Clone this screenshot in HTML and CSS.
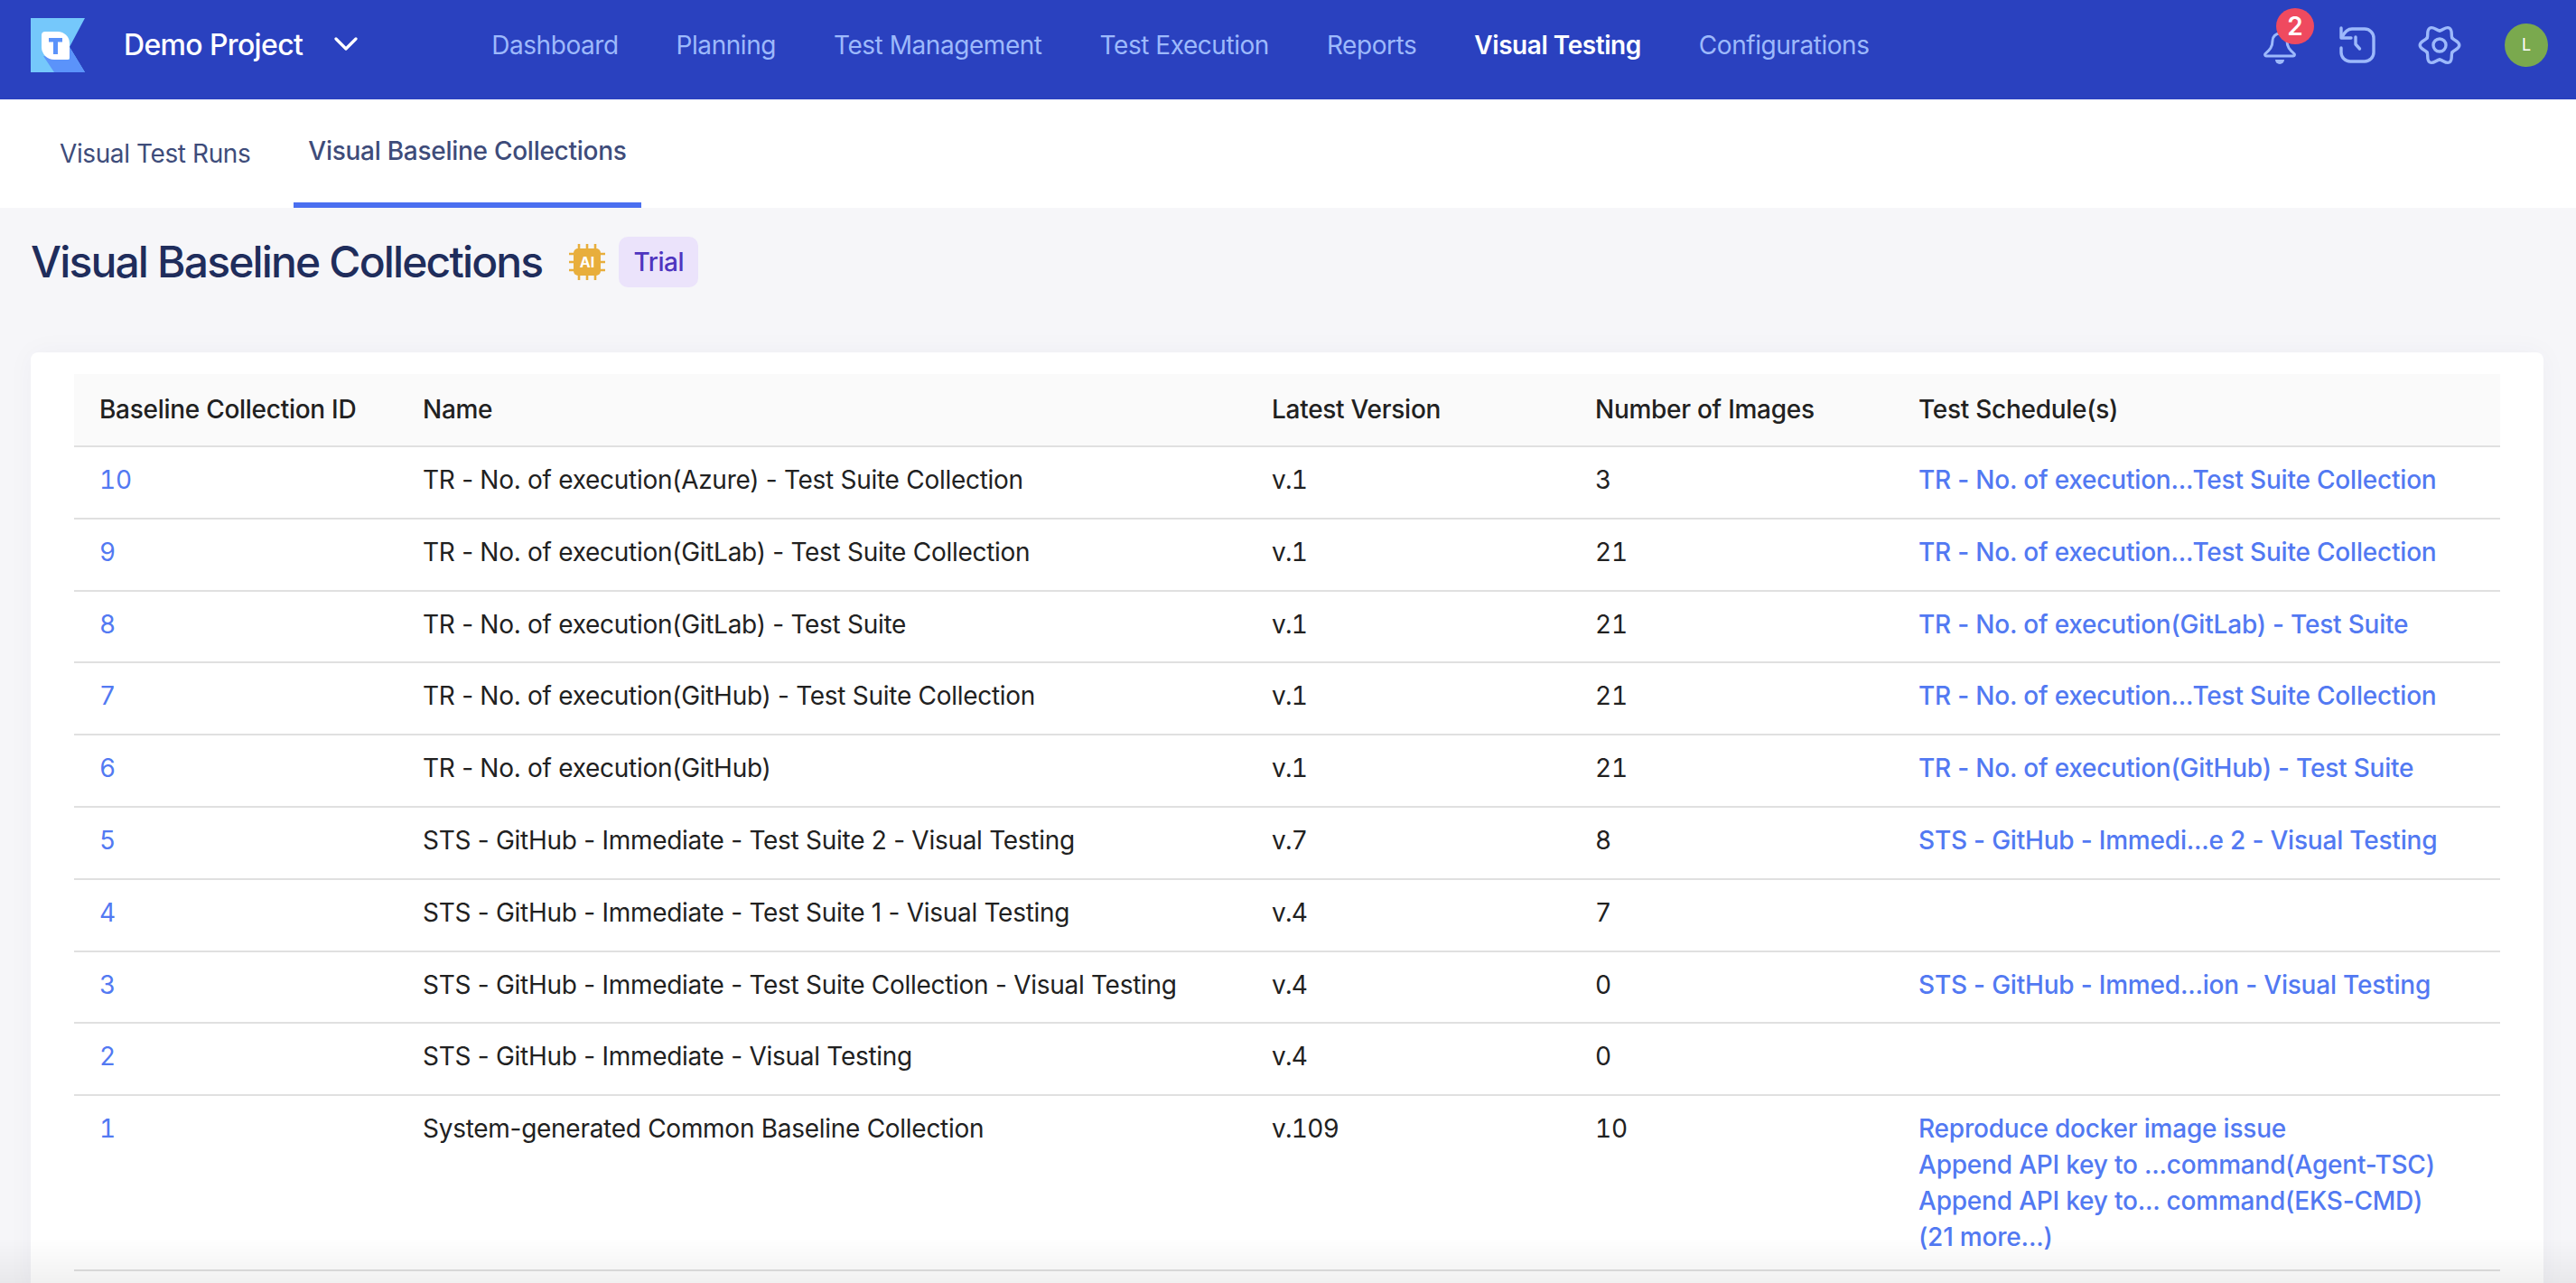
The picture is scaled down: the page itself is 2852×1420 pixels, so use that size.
FILE: index.html
```html
<!DOCTYPE html>
<html lang="en">
<head>
    <meta charset="UTF-8">
    <title>Visual Baseline Collections</title>
    <link rel="stylesheet" href="styles.css">
</head>
<body>
    <!-- top bar -->
    <header class="topbar">
        <svg class="logo" viewBox="0 0 60 60">
            <polygon points="0,0 60,0 43,32 60,60 0,60" fill="#75c8fb"/>
            <polygon points="14,42 26,60 60,60 43,32 43,46" fill="#5b93fa"/>
            <path d="M12 19a4 4 0 0 1 4-4h14a13 13 0 0 1 13 13v16a2 2 0 0 1-2 2H26a14 14 0 0 1-14-14z" fill="#fff"/>
            <path d="M20 22h15v4.500h-5V40h-5V26.500h-5z" fill="#5b93fa"/>
        </svg>
        <span class="project-name">Demo Project</span>
        <svg class="chevron" viewBox="0 0 26 16"><path d="M2 2l11 11L24 2" fill="none" stroke="#fff" stroke-width="3.200" stroke-linecap="round" stroke-linejoin="round"/></svg>
        <nav class="main-nav">
            <a>Dashboard</a>
            <a>Planning</a>
            <a>Test Management</a>
            <a>Test Execution</a>
            <a>Reports</a>
            <a class="active">Visual Testing</a>
            <a>Configurations</a>
        </nav>
        <div class="topbar-right">
            <div class="bell">
                <svg class="icon" viewBox="0 0 48 48">
                    <path d="M16 19a8 8 0 0 1 16 0c0 7 3 10 8 14.500 .8.9.4 2.500-1 2.500H9c-1.400 0-1.800-1.600-1-2.500 5-4.500 8-7.500 8-14.500z" fill="none" stroke="#9db9fb" stroke-width="3" stroke-linejoin="round"/>
                    <path d="M19 40h10a5 5 0 0 1-10 0z" fill="#9db9fb"/>
                </svg>
                <span class="badge">2</span>
            </div>
            <svg class="icon history" viewBox="0 0 48 48">
                <path d="M6 5v11h11" fill="none" stroke="#9db9fb" stroke-width="3.400" stroke-linecap="round" stroke-linejoin="round"/>
                <path d="M7 15c3-6 6-9 11-9h14a10 10 0 0 1 10 10v16a10 10 0 0 1-10 10H16A10 10 0 0 1 6 32v-5" fill="none" stroke="#9db9fb" stroke-width="3.400" stroke-linecap="round" stroke-linejoin="round"/>
                <path d="M22 15v8l4.500 5" fill="none" stroke="#9db9fb" stroke-width="3.400" stroke-linecap="round" stroke-linejoin="round"/>
            </svg>
            <svg class="icon gear" viewBox="0 0 48 48">
                <g fill="none" stroke="#9db9fb" stroke-width="3.400" stroke-linecap="round">
                    <path d="M37.860 16C39.900 19 45.800 19.500 45.800 24C45.800 28.500 39.900 29 37.860 32"/>
                    <path d="M37.860 16C39.900 19 45.800 19.500 45.800 24C45.800 28.500 39.900 29 37.860 32" transform="rotate(60 24 24)"/>
                    <path d="M37.860 16C39.900 19 45.800 19.500 45.800 24C45.800 28.500 39.900 29 37.860 32" transform="rotate(120 24 24)"/>
                    <path d="M37.860 16C39.900 19 45.800 19.500 45.800 24C45.800 28.500 39.900 29 37.860 32" transform="rotate(180 24 24)"/>
                    <path d="M37.860 16C39.900 19 45.800 19.500 45.800 24C45.800 28.500 39.900 29 37.860 32" transform="rotate(240 24 24)"/>
                    <path d="M37.860 16C39.900 19 45.800 19.500 45.800 24C45.800 28.500 39.900 29 37.860 32" transform="rotate(300 24 24)"/>
                    <circle cx="24" cy="24" r="7"/>
                </g>
            </svg>
            <div class="avatar">L</div>
        </div>
    </header>

    <!-- tabs -->
    <div class="tabs">
        <a class="tab">Visual Test Runs</a>
        <a class="tab tab-active">Visual Baseline Collections</a>
    </div>

    <main class="content">
        <div class="page-head">
            <h1>Visual Baseline Collections</h1>
            <svg class="ai-chip" viewBox="0 0 40 40">
                <path d="M11 0v40M20 0v40M29 0v40M0 11h40M0 20h40M0 29h40" stroke="#e8ae3c" stroke-width="2.600"/>
                <rect x="5" y="5" width="30" height="30" rx="5" fill="#e8ae3c"/>
                <text x="20" y="26" class="ai-chip-text" text-anchor="middle">AI</text>
            </svg>
            <span class="trial">Trial</span>
        </div>

        <section class="card">
            <table class="baseline-table">
                <colgroup>
                    <col class="col-id"><col class="col-name"><col class="col-version"><col class="col-images"><col class="col-schedule">
                </colgroup>
                <thead>
                    <tr>
                        <th>Baseline Collection ID</th>
                        <th>Name</th>
                        <th>Latest Version</th>
                        <th>Number of Images</th>
                        <th>Test Schedule(s)</th>
                    </tr>
                </thead>
                <tbody>
                    <tr>
                        <td class="num"><a class="id-link">10</a></td>
                        <td>TR - No. of execution(Azure) - Test Suite Collection</td>
                        <td class="num version">v.1</td>
                        <td class="num">3</td>
                        <td><a>TR - No. of execution...Test Suite Collection</a></td>
                    </tr>
                    <tr>
                        <td class="num"><a class="id-link">9</a></td>
                        <td>TR - No. of execution(GitLab) - Test Suite Collection</td>
                        <td class="num version">v.1</td>
                        <td class="num">21</td>
                        <td><a>TR - No. of execution...Test Suite Collection</a></td>
                    </tr>
                    <tr>
                        <td class="num"><a class="id-link">8</a></td>
                        <td>TR - No. of execution(GitLab) - Test Suite</td>
                        <td class="num version">v.1</td>
                        <td class="num">21</td>
                        <td><a>TR - No. of execution(GitLab) - Test Suite</a></td>
                    </tr>
                    <tr>
                        <td class="num"><a class="id-link">7</a></td>
                        <td>TR - No. of execution(GitHub) - Test Suite Collection</td>
                        <td class="num version">v.1</td>
                        <td class="num">21</td>
                        <td><a>TR - No. of execution...Test Suite Collection</a></td>
                    </tr>
                    <tr>
                        <td class="num"><a class="id-link">6</a></td>
                        <td>TR - No. of execution(GitHub)</td>
                        <td class="num version">v.1</td>
                        <td class="num">21</td>
                        <td><a>TR - No. of execution(GitHub) - Test Suite</a></td>
                    </tr>
                    <tr>
                        <td class="num"><a class="id-link">5</a></td>
                        <td>STS - GitHub - Immediate - Test Suite 2 - Visual Testing</td>
                        <td class="num version">v.7</td>
                        <td class="num">8</td>
                        <td><a>STS - GitHub - Immedi...e 2 - Visual Testing</a></td>
                    </tr>
                    <tr>
                        <td class="num"><a class="id-link">4</a></td>
                        <td>STS - GitHub - Immediate - Test Suite 1 - Visual Testing</td>
                        <td class="num version">v.4</td>
                        <td class="num">7</td>
                        <td></td>
                    </tr>
                    <tr>
                        <td class="num"><a class="id-link">3</a></td>
                        <td>STS - GitHub - Immediate - Test Suite Collection - Visual Testing</td>
                        <td class="num version">v.4</td>
                        <td class="num">0</td>
                        <td><a>STS - GitHub - Immed...ion - Visual Testing</a></td>
                    </tr>
                    <tr>
                        <td class="num"><a class="id-link">2</a></td>
                        <td>STS - GitHub - Immediate - Visual Testing</td>
                        <td class="num version">v.4</td>
                        <td class="num">0</td>
                        <td></td>
                    </tr>
                    <tr>
                        <td class="num"><a class="id-link">1</a></td>
                        <td>System-generated Common Baseline Collection</td>
                        <td class="num version">v.109</td>
                        <td class="num">10</td>
                        <td>
                            <a class="schedule-line">Reproduce docker image issue</a>
                            <a class="schedule-line">Append API key to ...command(Agent-TSC)</a>
                            <a class="schedule-line">Append API key to... command(EKS-CMD)</a>
                            <a class="schedule-line">(21 more...)</a>
                        </td>
                    </tr>
                </tbody>
            </table>
        </section>
    </main>
</body>
</html>
```

FILE: styles.css
```css
html, body {
    height: 100%;
}

body {
    margin: 0;
    height: 1420px;
    overflow: hidden;
    background-color: #f6f6f9;
    font-family: Inter, "Liberation Sans", sans-serif;
    font-size: 28px;
    line-height: 40px;
    color: #212121;
}

/* shade along the bottom edge of the window */
body::after {
    content: "";
    position: fixed;
    left: 0;
    right: 0;
    bottom: 0;
    height: 50px;
    background: linear-gradient(rgba(0, 0, 0, 0), rgba(0, 0, 0, 0.055));
    pointer-events: none;
}

/* top bar */
.topbar {
    display: flex;
    align-items: center;
    height: 110px;
    padding: 0 31px 10px 34px;
    box-sizing: border-box;
    background-color: #2a41bf;
}

.logo {
    width: 60px;
    height: 60px;
    flex: none;
}

.project-name {
    margin-left: 43px;
    font-size: 32px;
    font-weight: 500;
    letter-spacing: -0.65px;
    color: #fff;
}

.chevron {
    width: 26px;
    height: 16px;
    margin-left: 35px;
    margin-bottom: 2px;
}

.main-nav {
    display: flex;
    gap: 64px;
    margin-left: 148px;
    letter-spacing: -0.45px;
}

.main-nav a {
    color: #9db9fb;
}

.main-nav a.active {
    color: #fff;
    font-weight: 600;
}

.topbar-right {
    display: flex;
    align-items: center;
    margin-left: auto;
}

.bell {
    position: relative;
    width: 48px;
    height: 48px;
}

.icon {
    display: block;
    width: 48px;
    height: 48px;
}

.history {
    margin-left: 38px;
}

.gear {
    margin-left: 43px;
}

.badge {
    position: absolute;
    top: -17px;
    left: 20px;
    width: 42px;
    height: 40px;
    border-radius: 50%;
    background-color: #ef4a5f;
    color: #fff;
    font-size: 28px;
    font-weight: 600;
    line-height: 40px;
    text-align: center;
}

.avatar {
    width: 48px;
    height: 48px;
    margin-left: 48px;
    border-radius: 50%;
    background-color: #7aa94e;
    color: #fff;
    font-size: 18px;
    line-height: 48px;
    text-align: center;
}

/* tabs */
.tabs {
    display: flex;
    gap: 32px;
    height: 120px;
    padding-left: 50px;
    background-color: #fff;
}

.tab {
    padding: 40px 16px 0;
    color: #3e4c7a;
    letter-spacing: -0.4px;
}

.tab-active {
    padding-top: 37px;
    font-weight: 500;
    letter-spacing: -0.27px;
    border-bottom: 6px solid #4a6ff0;
}

/* page head */
.content {
    padding: 0 36px 0 34px;
}

.page-head {
    display: flex;
    align-items: center;
    height: 160px;
    padding-bottom: 40px;
    box-sizing: border-box;
}

.page-head h1 {
    margin: 0;
    font-size: 48px;
    line-height: 64px;
    font-weight: 500;
    letter-spacing: -1.85px;
    color: #1f2d5c;
}

.ai-chip {
    width: 40px;
    height: 40px;
    margin-left: 30px;
}

.ai-chip-text {
    font-size: 16px;
    font-weight: 700;
    fill: #fff;
}

.trial {
    margin-left: 15px;
    padding: 8px 16px;
    border-radius: 10px;
    background-color: #ebe3fb;
    color: #4f35bf;
    font-weight: 500;
    letter-spacing: -0.4px;
}

/* table card */
.card {
    padding: 24px 48px;
    border-radius: 8px;
    background-color: #fff;
    box-shadow: 0 0 30px rgba(30, 40, 90, 0.04);
}

.baseline-table {
    width: 100%;
    table-layout: fixed;
    border-collapse: collapse;
    letter-spacing: -0.28px;
}

.col-id, .col-version, .col-images {
    width: 358px;
}

.col-name {
    width: 940px;
}

.baseline-table th {
    height: 80px;
    padding: 0 28px 2px;
    box-sizing: border-box;
    background-color: #fafafa;
    border-bottom: 2px solid #e0e0e0;
    font-weight: 500;
    text-align: left;
}

.baseline-table td {
    height: 79.8px;
    padding: 16px 28px;
    box-sizing: border-box;
    border-bottom: 2px solid #e0e0e0;
    vertical-align: top;
}

.baseline-table .num {
    font-variant-numeric: tabular-nums;
}

.baseline-table .version {
    letter-spacing: -0.7px;
}

.baseline-table td a {
    color: #5279f2;
    font-weight: 500;
    letter-spacing: -0.2px;
}

.baseline-table td .id-link {
    font-weight: 400;
}

.schedule-line {
    display: block;
}
```
